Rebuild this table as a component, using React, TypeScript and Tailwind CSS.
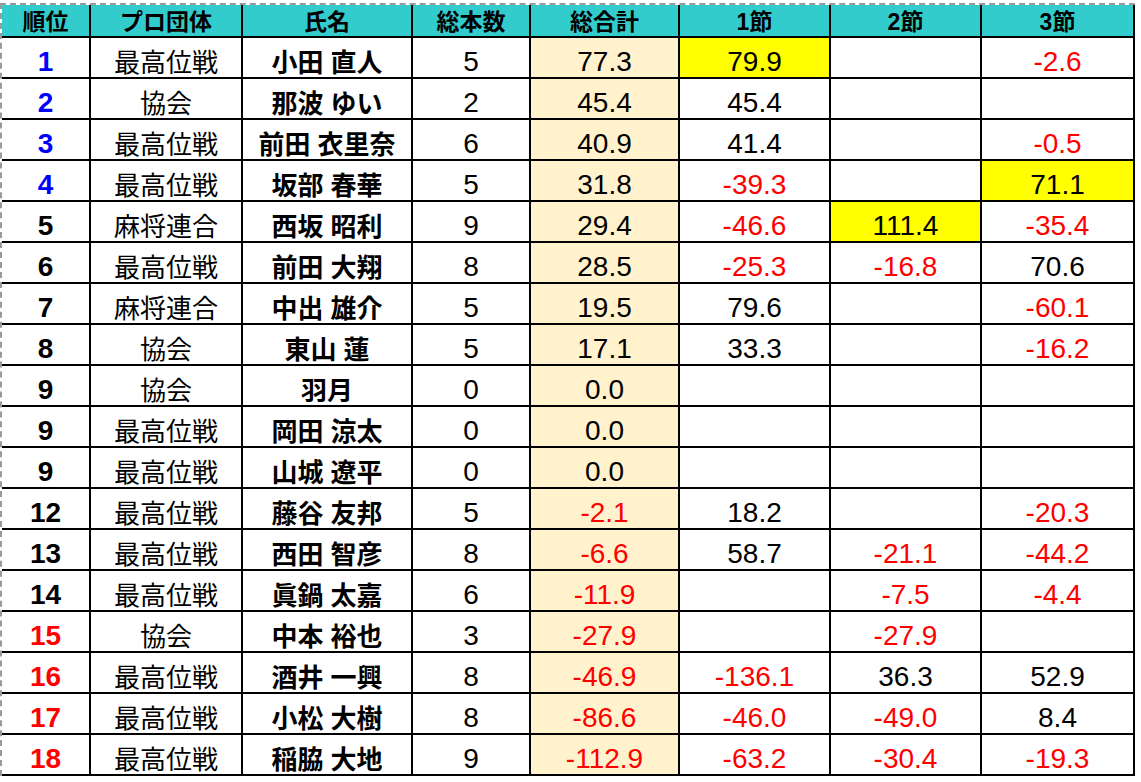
type Row = {
  rank: number;
  org: string;
  name: string;
  count: number;
  total: string;
  s1?: string;
  s2?: string;
  s3?: string;
  hl?: 1 | 2 | 3;
};

const rows: Row[] = [
  { rank: 1, org: "最高位戦", name: "小田 直人", count: 5, total: "77.3", s1: "79.9", s3: "-2.6", hl: 1 },
  { rank: 2, org: "協会", name: "那波 ゆい", count: 2, total: "45.4", s1: "45.4" },
  { rank: 3, org: "最高位戦", name: "前田 衣里奈", count: 6, total: "40.9", s1: "41.4", s3: "-0.5" },
  { rank: 4, org: "最高位戦", name: "坂部 春華", count: 5, total: "31.8", s1: "-39.3", s3: "71.1", hl: 3 },
  { rank: 5, org: "麻将連合", name: "西坂 昭利", count: 9, total: "29.4", s1: "-46.6", s2: "111.4", s3: "-35.4", hl: 2 },
  { rank: 6, org: "最高位戦", name: "前田 大翔", count: 8, total: "28.5", s1: "-25.3", s2: "-16.8", s3: "70.6" },
  { rank: 7, org: "麻将連合", name: "中出 雄介", count: 5, total: "19.5", s1: "79.6", s3: "-60.1" },
  { rank: 8, org: "協会", name: "東山 蓮", count: 5, total: "17.1", s1: "33.3", s3: "-16.2" },
  { rank: 9, org: "協会", name: "羽月", count: 0, total: "0.0" },
  { rank: 9, org: "最高位戦", name: "岡田 涼太", count: 0, total: "0.0" },
  { rank: 9, org: "最高位戦", name: "山城 遼平", count: 0, total: "0.0" },
  { rank: 12, org: "最高位戦", name: "藤谷 友邦", count: 5, total: "-2.1", s1: "18.2", s3: "-20.3" },
  { rank: 13, org: "最高位戦", name: "西田 智彦", count: 8, total: "-6.6", s1: "58.7", s2: "-21.1", s3: "-44.2" },
  { rank: 14, org: "最高位戦", name: "眞鍋 太嘉", count: 6, total: "-11.9", s2: "-7.5", s3: "-4.4" },
  { rank: 15, org: "協会", name: "中本 裕也", count: 3, total: "-27.9", s2: "-27.9" },
  { rank: 16, org: "最高位戦", name: "酒井 一興", count: 8, total: "-46.9", s1: "-136.1", s2: "36.3", s3: "52.9" },
  { rank: 17, org: "最高位戦", name: "小松 大樹", count: 8, total: "-86.6", s1: "-46.0", s2: "-49.0", s3: "8.4" },
  { rank: 18, org: "最高位戦", name: "稲脇 大地", count: 9, total: "-112.9", s1: "-63.2", s2: "-30.4", s3: "-19.3" },
];

const headers = ["順位", "プロ団体", "氏名", "総本数", "総合計", "1節", "2節", "3節"];
const widths = [89, 152, 170, 118, 149, 151, 151, 153];

const cell = "border-r-2 border-b-2 border-black p-0 text-center align-bottom leading-none";
const num = "text-[28px] pb-[1px]";
const jp = "text-[26px] pb-[1px]";

function tone(v?: string) {
  return v && v.startsWith("-") ? "text-[#ff0000]" : "text-black";
}

function rankTone(i: number) {
  if (i < 4) return "text-[#0000ff]";
  if (i >= 14) return "text-[#ff0000]";
  return "text-black";
}

export default function App() {
  return (
    <div className="min-h-screen bg-white pt-[3px] font-['Liberation_Sans','Noto_Sans_CJK_JP',sans-serif]">
      <div className="w-fit border-t-2 border-l-2 border-dashed border-[#9a9a9a]">
        <table className="table-fixed border-separate border-spacing-0">
          <colgroup>
            {widths.map((w, i) => (
              <col key={i} style={{ width: w }} />
            ))}
          </colgroup>
          <thead>
            <tr className="h-[33px] bg-[#33cccc]">
              {headers.map((h) => (
                <th key={h} className={`${cell} pb-[2px] text-[23px] font-bold text-black`}>
                  {h}
                </th>
              ))}
            </tr>
          </thead>
          <tbody>
            {rows.map((r, i) => (
              <tr key={i} className="h-[41px]">
                <td className={`${cell} ${num} font-bold ${rankTone(i)}`}>{r.rank}</td>
                <td className={`${cell} ${jp} text-black`}>{r.org}</td>
                <td className={`${cell} ${jp} font-bold text-black`}>{r.name}</td>
                <td className={`${cell} ${num} text-black`}>{r.count}</td>
                <td className={`${cell} ${num} bg-[#fff2cc] ${tone(r.total)}`}>{r.total}</td>
                <td className={`${cell} ${num} ${r.hl === 1 ? "bg-[#ffff00]" : ""} ${tone(r.s1)}`}>{r.s1}</td>
                <td className={`${cell} ${num} ${r.hl === 2 ? "bg-[#ffff00]" : ""} ${tone(r.s2)}`}>{r.s2}</td>
                <td className={`${cell} ${num} ${r.hl === 3 ? "bg-[#ffff00]" : ""} ${tone(r.s3)}`}>{r.s3}</td>
              </tr>
            ))}
          </tbody>
        </table>
      </div>
    </div>
  );
}
